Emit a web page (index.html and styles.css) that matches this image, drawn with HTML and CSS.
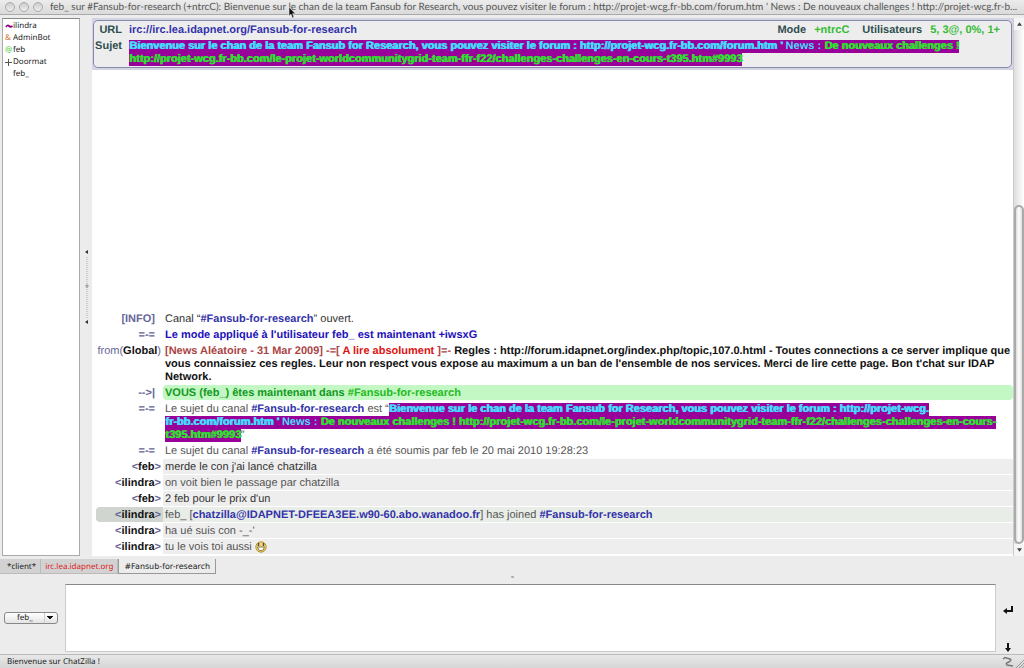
FILE: index.html
```html
<!DOCTYPE html>
<html lang="fr">
<head>
<meta charset="utf-8">
<title>ChatZilla</title>
<link rel="stylesheet" href="styles.css">
</head>
<body>
<div class="window">
  <header class="titlebar">
    <span class="light"></span><span class="light"></span><span class="light"></span>
    <h1 class="title">feb_ sur #Fansub-for-research (+ntrcC): Bienvenue sur le chan de la team Fansub for Research, vous pouvez visiter le forum : http://projet-wcg.fr-bb.com/forum.htm ' News : De nouveaux challenges ! http://projet-wcg.fr-b...</h1>
    <svg class="pointer" viewBox="0 0 8 13" aria-hidden="true"><path d="M1 1V10L3 8.3L4.4 12L6 11.3L4.6 7.8H7.4Z" fill="#111" stroke="#eee" stroke-width=".6"/></svg>
  </header>

  <main class="workspace">
    <ul class="users">
      <li><svg class="mark" viewBox="0 0 8 12" aria-label="~"><path d="M1 7Q2.5 4.5 4 6T7.500 6" fill="none" stroke="#808" stroke-width="1.800"/></svg>ilindra</li>
      <li><span class="mark admin">&amp;</span>AdminBot</li>
      <li><span class="mark op">@</span>feb</li>
      <li><svg class="mark" viewBox="0 0 8 12" aria-label="+"><path d="M0 6.500H7M3.500 3V10" stroke="#555"/></svg>Doormat</li>
      <li><span class="mark"></span>feb_</li>
    </ul>
    <div class="splitter">
      <svg width="6" height="76" viewBox="0 0 6 76" aria-hidden="true"><path d="M5 1V5L2 3ZM5 71V75L2 73Z" fill="#333"/><path d="M4 8V70" stroke="#ccc" stroke-width="2" stroke-dasharray="1 1"/><path d="M2 37H6M4 35V39" stroke="#999"/></svg>
    </div>
    <section class="chat">
      <div class="channel">
        <div class="channel-box">
          <span class="label">URL</span>
          <div class="channel-line">
            <a class="link" href="#">irc://irc.lea.idapnet.org/Fansub-for-research</a>
            <span class="stats"><span class="label">Mode</span><span class="value">+ntrcC</span><span class="label users-label">Utilisateurs</span><span class="value">5, 3@, 0%, 1+</span></span>
          </div>
          <span class="label">Sujet</span>
          <div class="topic-line"><span class="topic"><b class="heavy">Bienvenue sur le chan de la team Fansub for Research, vous pouvez visiter le forum : http://projet-wcg.fr-bb.com/forum.htm '</b> News : <b class="lime heavy">De nouveaux challenges !<br>http://projet-wcg.fr-bb.com/le-projet-worldcommunitygrid-team-ffr-f22/challenges-challenges-en-cours-t395.htm#9993</b></span></div>
        </div>
      </div>
      <div class="log">
        <table class="messages">
          <tr><th class="code">[INFO]</th><td>Canal “<a class="link" href="#">#Fansub-for-research</a>” ouvert.</td></tr>
          <tr><th class="code">=-=</th><td class="mode">Le mode appliqué à l'utilisateur feb_ est maintenant +iwsxG</td></tr>
          <tr><th class="from">from(<b>Global</b>)</th><td class="notice"><span class="news">[News Aléatoire - 31 Mar 2009]</span> <span class="alert"><span class="news">-=[</span> A lire absolument <span class="news">]=-</span></span> Regles : http://forum.idapnet.org/index.php/topic,107.0.html - Toutes connections a ce server implique que<br>vous connaissiez ces regles. Leur non respect vous expose au maximum a un ban de l'ensemble de nos services. Merci de lire cette page. Bon t'chat sur IDAP<br>Network.</td></tr>
          <tr class="join"><th class="code">--&gt;|</th><td>VOUS (feb_) êtes maintenant dans <a class="link" href="#">#Fansub-for-research</a></td></tr>
          <tr><th class="code">=-=</th><td class="muted">Le sujet du canal <a class="link" href="#">#Fansub-for-research</a> est “<span class="topic"><b class="heavy">Bienvenue sur le chan de la team Fansub for Research, vous pouvez visiter le forum : http://projet-wcg.<br>fr-bb.com/forum.htm '</b> News : <b class="lime heavy">De nouveaux challenges ! http://projet-wcg.fr-bb.com/le-projet-worldcommunitygrid-team-ffr-f22/challenges-challenges-en-cours-<br>t395.htm#9993</b></span>”</td></tr>
          <tr><th class="code">=-=</th><td class="muted">Le sujet du canal <a class="link" href="#">#Fansub-for-research</a> a été soumis par feb le 20 mai 2010 19:28:23</td></tr>
          <tr class="said"><th>&lt;<b>feb</b>&gt;</th><td>merde le con j'ai lancé chatzilla</td></tr>
          <tr class="said other"><th>&lt;<b>ilindra</b>&gt;</th><td>on voit bien le passage par chatzilla</td></tr>
          <tr class="said"><th>&lt;<b>feb</b>&gt;</th><td>2 feb pour le prix d'un</td></tr>
          <tr class="said other marked"><th>&lt;<b>ilindra</b>&gt;</th><td>feb_ [<a class="link" href="#">chatzilla@IDAPNET-DFEEA3EE.w90-60.abo.wanadoo.fr</a>] has joined <a class="link" href="#">#Fansub-for-research</a></td></tr>
          <tr class="said other"><th>&lt;<b>ilindra</b>&gt;</th><td>ha ué suis con -_-'</td></tr>
          <tr class="said other"><th>&lt;<b>ilindra</b>&gt;</th><td>tu le vois toi aussi <svg class="smiley" viewBox="0 0 12 12" role="img" aria-label="sourire"><circle cx="6" cy="6" r="5.2" fill="#f3d873" stroke="#b79332"/><path d="M3.500 2V5M8.500 2V5" stroke="#4b5058" stroke-width="1.500"/><path d="M2.6 6H9.4Q9 9.8 6 9.8T2.6 6Z" fill="#fff" stroke="#695a32" stroke-width=".8"/></svg></td></tr>
        </table>
      </div>
    </section>
    <div class="scrollbar">
      <span class="arrow"><svg viewBox="0 0 6 4"><path d="M0 4H6L3 0Z"/></svg></span>
      <div class="track"><div class="thumb"></div></div>
      <span class="arrow"><svg viewBox="0 0 6 4"><path d="M0 0H6L3 4Z"/></svg></span>
    </div>
  </main>

  <nav class="tabs">
    <button class="tab">*client*</button><button class="tab hot">irc.lea.idapnet.org</button><button class="tab current">#Fansub-for-research</button>
  </nav>
  <div class="grip"><span></span></div>
  <form class="composer">
    <select class="nick" aria-label="Pseudo"><option>feb_</option></select>
    <textarea class="message" aria-label="Message"></textarea>
    <div class="actions">
      <button type="button" aria-label="Envoyer"><svg width="10" height="8" viewBox="0 0 10 8"><path d="M9 0V5H3" fill="none" stroke="#111" stroke-width="2"/><path d="M0 5L4 2V8Z" fill="#111"/></svg></button>
      <button type="button" aria-label="Réduire"><svg width="6" height="9" viewBox="0 0 6 9"><path d="M3 0V6" stroke="#111" stroke-width="2"/><path d="M0 5H6L3 9Z" fill="#111"/></svg></button>
    </div>
  </form>
  <footer class="status">
    <span>Bienvenue sur ChatZilla !</span>
    <svg width="22" height="12" viewBox="0 0 22 12" aria-hidden="true"><path d="M1 3L3 1.500L8 3Q10 4 7 6Q3 7 5 9L11 10" fill="none" stroke="#777" stroke-width="1.500"/><path d="M14 12L22 4M17 12L22 7M20 12L22 10" stroke="#999"/></svg>
  </footer>
</div>
</body>
</html>
```
FILE: styles.css
```css
* { box-sizing: border-box; }
body { margin: 0; background: #ececec; font-family: "Noto Sans", sans-serif; color: #222; text-rendering: geometricPrecision; }
button, select, textarea { font: inherit; color: inherit; margin: 0; text-rendering: inherit; }
a { text-decoration: none; }
.window { display: flex; flex-direction: column; height: 100vh; overflow: hidden; }

.titlebar { position: relative; display: flex; align-items: center; gap: 4px; height: 15px; padding: 0 5px; flex: none; background: linear-gradient(#ececec, #dadada); border-bottom: 1px solid #aaa; }
.light { width: 10px; height: 10px; flex: none; border: 1px solid #aaa; border-radius: 50%; background: linear-gradient(#ccc, #eee); }
.title { margin: 0 0 0 3px; font: 10px/14px Lato, sans-serif; color: #555; white-space: nowrap; }
.pointer { position: absolute; left: 288px; top: 6px; width: 8px; height: 13px; }

.workspace { flex: 1; display: flex; min-height: 0; padding: 3px 0 0 2px; }
.users { width: 78px; flex: none; margin: 0; padding: 1px 2px; list-style: none; background: #fff; border: 1px solid #aaa; border-top-color: #888; font: 8px/12px "Noto Sans", sans-serif; }
.users li { display: flex; }
.mark { width: 8px; height: 12px; flex: none; }
.admin { color: #c73; }
.op { color: #4c4; }
.splitter { width: 12px; flex: none; display: flex; align-items: center; justify-content: center; }

.chat { flex: 1; min-width: 0; display: flex; flex-direction: column; background: #fff; font: 11px/13px "Liberation Sans", Arial, sans-serif; }
.channel { flex: none; padding: 2px 1px; background: #d3d3e4; }
.channel-box { display: grid; grid-template-columns: 28px 1fr; column-gap: 7px; row-gap: 3px; padding: 3px 11px 1px 0; background: #ededed; border: 1px solid #88a; border-radius: 5px; }
.channel-box > .label { text-align: right; }
.channel-line { display: flex; justify-content: space-between; }
.label { font-weight: bold; color: #2f4f4f; }
.value { font-weight: bold; color: #3b3; margin-left: 8px; }
.users-label { margin-left: 13px; }
.link { font-weight: bold; color: #33a; }
.topic { background: #909; color: #4df; font-weight: bold; padding-bottom: 1px; }
.lime { color: #3d3; }
.heavy { text-shadow: 1px 0 currentColor; }

.log { flex: 1; min-height: 0; display: flex; align-items: flex-end; padding: 0 0 1px 4px; }
.messages { width: 100%; border-spacing: 0 1px; table-layout: fixed; }
.messages th { width: 67px; padding: 2px 2px 0 0; text-align: right; vertical-align: top; font-weight: bold; color: #669; white-space: nowrap; }
.messages th b { color: #111; }
.messages .code { padding-right: 8px; }
.messages .from { font-weight: normal; }
.messages td { padding: 2px 2px 0; white-space: nowrap; color: #333; }
.messages .mode { font-weight: bold; color: #21b; }
.messages .notice { font-weight: bold; color: #111; }
.news { color: #a44; }
.alert { color: #d11; }
.messages .muted, .messages .other td { color: #555; }
.messages .join td { background: #c3f7c3; color: #192; font-weight: bold; border-radius: 4px; }
.join .link { color: #2b2; }
.said td { background: #eee; }
.messages .marked th { background: #d0d5d0; border-radius: 4px 0 0 4px; }
.messages .marked td { background: #e8ede8; }
.smiley { width: 12px; height: 12px; vertical-align: top; }

.scrollbar { width: 11px; flex: none; display: flex; flex-direction: column; background: #f5f5f5; border-left: 1px solid #ccc; }
.arrow { height: 12px; display: grid; place-items: center; }
.arrow svg { width: 5px; height: 4px; fill: #444; }
.track { flex: 1; display: flex; align-items: flex-end; background: linear-gradient(90deg, #ddd, #fff); }
.thumb { width: 100%; height: 66%; border: 2px solid #aaa; border-radius: 5px; background: linear-gradient(90deg, #ddd, #fff, #ddd); }

.tabs { display: flex; flex: none; align-items: flex-start; height: 17px; margin-top: 3px; font: 8px/13px "Noto Sans", sans-serif; }
.tab { height: 15px; padding: 0 4px 0 7px; background: #d2d2d2; border: 0; border-right: 1px solid #bbb; border-bottom: 1px solid #bbb; }
.tab.hot { color: #d22; padding: 0 4px; }
.tab.current { background: #ececec; padding: 0 5px; border: 1px solid #999; border-top: 0; font-family: "DejaVu Sans", sans-serif; }
.grip { height: 8px; flex: none; display: grid; place-items: start center; }
.grip span { width: 3px; height: 2px; background: #aaa; border-radius: 1px; }
.composer { display: flex; flex: none; align-items: center; gap: 7px; height: 70px; padding: 0 11px 2px 4px; }
.nick { width: 54px; height: 12px; padding: 0 4px 0 12px; appearance: none; border: 1px solid #888; border-radius: 3px; font: 8px/10px "Noto Sans", sans-serif; background: conic-gradient(from -37deg at 50% 100%, #111 74deg, #0000 0) right 4px center / 6px 4px no-repeat, linear-gradient(#ccc, #ccc) right 12px center / 1px 100% no-repeat, linear-gradient(#fff, #e4e4e4); }
.message { flex: 1; align-self: stretch; resize: none; background: #fff; border: 1px solid #ccc; border-top: 1px solid #888; padding: 2px; }
.actions { align-self: stretch; width: 10px; display: flex; flex-direction: column; align-items: center; justify-content: flex-end; gap: 29px; }
.actions button { display: flex; padding: 0; border: 0; background: none; }
.status { display: flex; flex: none; align-items: center; justify-content: space-between; height: 14px; padding: 0 0 0 7px; border-top: 1px solid #bbb; background: linear-gradient(#e8e8e8, #d6d6d6); font: 8px/12px "Noto Sans", sans-serif; }
```
